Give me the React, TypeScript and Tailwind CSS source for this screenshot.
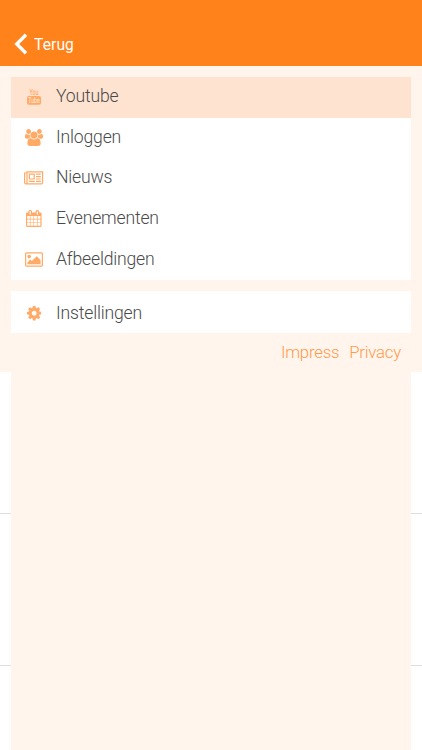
import React from "react";

type IconProps = {
  viewBox: string;
  path: string;
  className: string;
};

type MenuItem = {
  label: string;
  icon: React.ReactNode;
  active?: boolean;
};

function Icon({ viewBox, path, className }: IconProps) {
  return (
    <svg viewBox={viewBox} className={className} fill="currentColor" aria-hidden="true">
      <path d={path} />
    </svg>
  );
}

function YoutubeIcon() {
  return (
    <svg
      viewBox="0 0 14 17"
      className="mb-[2px] h-[17px] w-[14px] overflow-visible"
      textRendering="geometricPrecision"
      aria-hidden="true"
    >
      <text
        transform="translate(7 7) scale(0.62 1)"
        textAnchor="middle"
        fontSize="8.6"
        fontWeight="500"
        fontFamily="Roboto, sans-serif"
        fill="currentColor"
      >
        You
      </text>
      <rect x="0" y="8" width="14" height="8.8" rx="1.8" fill="currentColor" />
      <text
        transform="translate(7 15.3) scale(0.64 1)"
        textAnchor="middle"
        fontSize="8"
        fontWeight="500"
        fontFamily="Roboto, sans-serif"
        fill="#ffe3d1"
      >
        Tube
      </text>
    </svg>
  );
}

const menuItems: MenuItem[] = [
  { label: "Youtube", icon: <YoutubeIcon />, active: true },
  {
    label: "Inloggen",
    icon: (
      <Icon
        viewBox="0 0 1920 1792"
        className="h-[17px] w-[18px]"
        path="M593 896q-162 5-265 128h-134q-82 0-138-40.5t-56-118.5q0-353 124-353 6 0 43.5 21t97.5 42.5 119 21.5q67 0 133-23-5 37-5 66 0 139 81 256zM1664 1533q0 120-73 189.5t-194 69.5h-874q-121 0-194-69.5t-73-189.5q0-53 3.5-103.5t14-109 26.5-108.5 43-97.5 62-81 85.5-53.5 111.5-20q10 0 43 21.5t73 48 107 48 135 21.5 135-21.5 107-48 73-48 43-21.5q61 0 111.5 20t85.5 53.5 62 81 43 97.5 26.5 108.5 14 109 3.5 103.5zM640 256q0 106-75 181t-181 75-181-75-75-181 75-181 181-75 181 75 75 181zM1344 640q0 159-112.5 271.5t-271.5 112.5-271.5-112.5-112.5-271.5 112.5-271.5 271.5-112.5 271.5 112.5 112.5 271.5zM1920 865q0 78-56 118.5t-138 40.5h-134q-103-123-265-128 81-117 81-256 0-29-5-66 66 23 133 23 59 0 119-21.5t97.5-42.5 43.5-21q124 0 124 353zM1792 256q0 106-75 181t-181 75-181-75-75-181 75-181 181-75 181 75 75 181z"
      />
    ),
  },
  {
    label: "Nieuws",
    icon: (
      <Icon
        viewBox="0 0 2048 1664"
        className="mb-[2px] h-[15.6px] w-[19.2px]"
        path="M1024 512h-384v384h384v-384zM1152 1152v128h-640v-128h640zM1152 384v640h-640v-640h640zM1792 1152v128h-512v-128h512zM1792 896v128h-512v-128h512zM1792 640v128h-512v-128h512zM1792 384v128h-512v-128h512zM256 1344v-960h-128v960q0 26 19 45t45 19 45-19 19-45zM1920 1344v-1088h-1536v1088q0 33-11 64h1483q26 0 45-19t19-45zM2048 128v1216q0 80-56 136t-136 56h-1664q-80 0-136-56t-56-136v-1088h256v-128h1792z"
      />
    ),
  },
  {
    label: "Evenementen",
    icon: (
      <Icon
        viewBox="0 0 1664 1792"
        className="mb-px h-[17px] w-[15.6px]"
        path="M128 1664h288v-288h-288v288zM480 1664h320v-288h-320v288zM128 1312h288v-320h-288v320zM480 1312h320v-320h-320v320zM128 928h288v-288h-288v288zM864 1664h320v-288h-320v288zM480 928h320v-288h-320v288zM1248 1664h288v-288h-288v288zM864 1312h320v-320h-320v320zM512 448v-288q0-13-9.5-22.5t-22.5-9.5h-64q-13 0-22.5 9.5t-9.5 22.5v288q0 13 9.5 22.5t22.5 9.5h64q13 0 22.5-9.5t9.5-22.5zM1248 1312h288v-320h-288v320zM864 928h320v-288h-320v288zM1248 928h288v-288h-288v288zM1280 448v-288q0-13-9.5-22.5t-22.5-9.5h-64q-13 0-22.5 9.5t-9.5 22.5v288q0 13 9.5 22.5t22.5 9.5h64q13 0 22.5-9.5t9.5-22.5zM1664 384v1280q0 52-38 90t-90 38h-1408q-52 0-90-38t-38-90v-1280q0-52 38-90t90-38h128v-96q0-66 47-113t113-47h64q66 0 113 47t47 113v96h384v-96q0-66 47-113t113-47h64q66 0 113 47t47 113v96h128q52 0 90 38t38 90z"
      />
    ),
  },
  {
    label: "Afbeeldingen",
    icon: (
      <Icon
        viewBox="0 0 1920 1792"
        className="h-[17px] w-[18px]"
        path="M640 576q0 80-56 136t-136 56-136-56-56-136 56-136 136-56 136 56 56 136zM1664 960v448h-1408v-192l320-320 160 160 512-512zM1760 256h-1600q-13 0-22.5 9.5t-9.5 22.5v1216q0 13 9.5 22.5t22.5 9.5h1600q13 0 22.5-9.5t9.5-22.5v-1216q0-13-9.5-22.5t-22.5-9.5zM1920 288v1216q0 66-47 113t-113 47h-1600q-66 0-113-47t-47-113v-1216q0-66 47-113t113-47h1600q66 0 113 47t47 113z"
      />
    ),
  },
];

const settingsItem: MenuItem = {
  label: "Instellingen",
  icon: (
    <Icon
      viewBox="0 128 1536 1536"
      className="mb-px size-[14.4px]"
      path="M1024 896q0-106-75-181t-181-75-181 75-75 181 75 181 181 75 181-75 75-181zM1536 787v222q0 12-8 23t-20 13l-185 28q-19 54-39 91 35 50 107 138 10 12 10 25t-9 23q-27 37-99 108t-94 71q-12 0-26-9l-138-108q-44 23-91 38-16 136-29 186-7 28-36 28h-222q-14 0-24.5-8.5t-11.5-21.5l-28-184q-49-16-90-37l-141 107q-10 9-25 9-14 0-25-11-126-114-165-168-7-10-7-23 0-12 8-23 15-21 51-66.5t54-70.5q-27-50-41-99l-183-27q-13-2-21-12.5t-8-23.5v-222q0-12 8-23t19-13l186-28q14-46 39-92-40-57-107-138-10-12-10-24 0-10 9-23 26-36 98.5-107.5t94.5-71.5q13 0 26 10l138 107q44-23 91-38 16-136 29-186 7-28 36-28h222q14 0 24.5 8.5t11.5 21.5l28 184q49 16 90 37l142-107q9-9 24-9 13 0 25 10 129 119 165 170 7 8 7 22 0 12-8 23-15 21-51 66.5t-54 70.5q26 50 41 98l183 28q13 2 21 12.5t8 23.5z"
    />
  ),
};

function MenuRow({ label, icon, active }: MenuItem) {
  return (
    <li className={`flex min-h-0 flex-1 items-center ${active ? "bg-[#ffe3d1]" : ""}`}>
      <span className="flex w-[46px] shrink-0 items-center justify-center text-[#ffaa66]">
        {icon}
      </span>
      <span className="-mt-[2px] -ml-px text-[17.6px] leading-6 font-light tracking-[-0.18px] text-[#4a4a4a]">
        {label}
      </span>
    </li>
  );
}

export default function App() {
  return (
    <div className="flex h-[750px] w-[422px] flex-col overflow-hidden bg-white font-[Roboto,sans-serif]">
      <header className="flex h-[66px] shrink-0 items-end bg-[#ff821b] pb-[11px] pl-[14px] text-white">
        <button className="flex items-center gap-[6px]">
          <svg viewBox="0 0 14 22" className="h-[22px] w-[14px]" fill="none" aria-hidden="true">
            <path d="M12 1.8L2.8 11L12 20.2" stroke="currentColor" strokeWidth="3.4" />
          </svg>
          <span className="pt-px text-[15.6px] leading-5 tracking-[0.1px]">Terug</span>
        </button>
      </header>

      <nav className="flex h-[306px] shrink-0 flex-col bg-[#fff5ec] px-[11px] pt-[11px]">
        <ul className="flex h-[203px] shrink-0 flex-col bg-white">
          {menuItems.map((item) => (
            <MenuRow key={item.label} {...item} />
          ))}
        </ul>
        <ul className="mt-[11px] flex h-[42px] shrink-0 flex-col bg-white pt-[4px]">
          <MenuRow {...settingsItem} />
        </ul>
        <div className="mt-[7px] flex justify-end gap-[10px] pr-[10px] text-[16.8px] leading-6 font-light tracking-[-0.22px] text-[#ff9a4d]">
          <a>Impress</a>
          <a>Privacy</a>
        </div>
      </nav>

      {/* list behind the drawer, only its edges stay visible */}
      <main className="grid flex-1 grid-rows-[142px_152px_1fr]">
        <div className="border-b border-[#dedede] px-[11px]">
          <div className="-mb-px h-[142px] bg-[#fff5ec]"></div>
        </div>
        <div className="border-b border-[#dedede] px-[11px]">
          <div className="-mb-px h-[152px] bg-[#fff5ec]"></div>
        </div>
        <div className="px-[11px]">
          <div className="h-full bg-[#fff5ec]"></div>
        </div>
      </main>
    </div>
  );
}
